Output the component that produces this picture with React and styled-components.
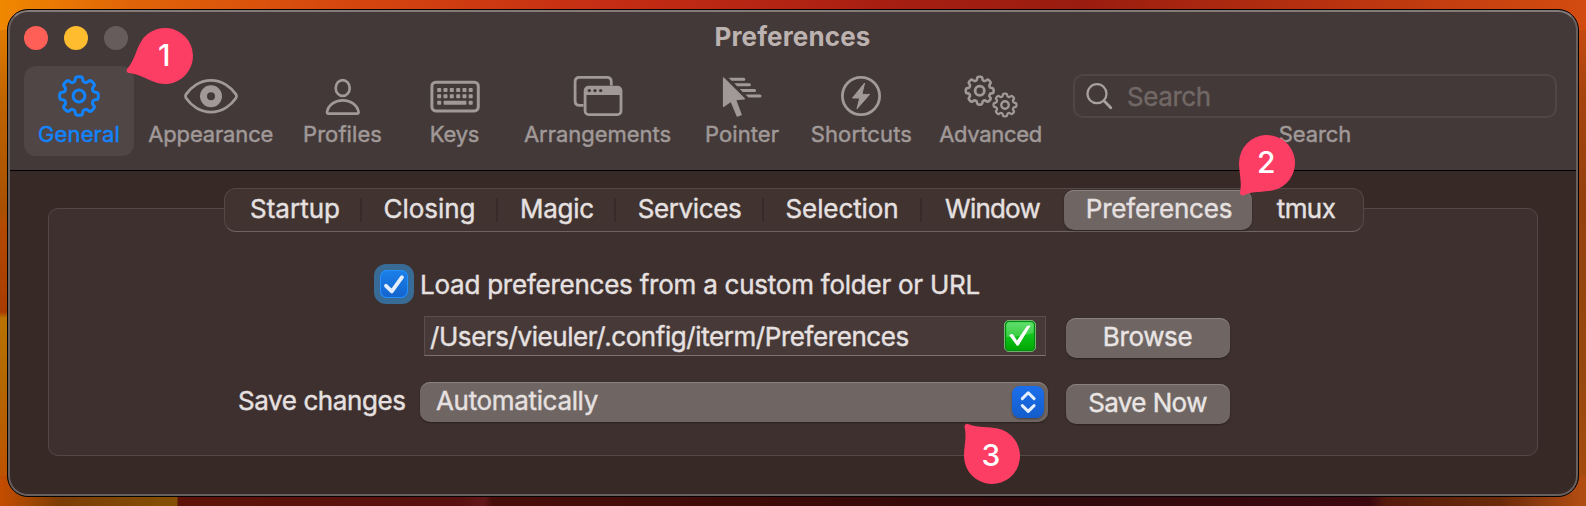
import React from "react";
import styled, { createGlobalStyle } from "styled-components";

const GlobalStyle = createGlobalStyle`
  * { box-sizing: border-box; }
  body { margin: 0; overflow: hidden; font-family: Inter, "Liberation Sans", sans-serif; }
`;

const Desktop = styled.main`
  position: relative;
  width: 1586px;
  height: 506px;
  padding: 9px 7px;
  background:
    linear-gradient(90deg, #f08800 0, #e06408 130px, #d6480e 330px, #c42c14 620px, #a61e12 900px, #9a1c10 1080px, #b83210 1330px, #d24c10 1586px) 0 0 / 100% 30px no-repeat,
    linear-gradient(90deg, #c44c00 0, #a84800 24px, #7c3c04 60px, #845004 177px, #5e1209 178px, #581110 460px, #621818 484px, #480e0a 492px, #3c0a08 790px, #300a0c 1060px, #3c0810 1370px, #561a0c 1386px, #6a2a0a 1500px, #b04c12 1580px) 0 100% / 100% 30px no-repeat,
    linear-gradient(180deg, #ee8600 0, #c06400 100px, #a85000 210px, #b44a00 226px, #a83c00 312px, #b97200 318px, #b46600 390px, #c24c00 506px) 0 0 / 30px 100% no-repeat,
    linear-gradient(180deg, #d24c10 0, #a8440e 90px, #93400e 200px, #98480e 380px, #a84c10 506px) 100% 0 / 30px 100% no-repeat;
`;

const Window = styled.section`
  display: flex;
  flex-direction: column;
  height: 488px;
  border: 1px solid #050303;
  border-radius: 21px;
  overflow: hidden;
  background: #372926;
  position: relative;

  &::after {
    content: "";
    position: absolute;
    inset: 0;
    border: 2px solid #68605e;
    border-top-color: #847b79;
    border-radius: 20px;
    pointer-events: none;
  }
`;

const Header = styled.header`
  height: 161px;
  background: #433938;
  border-bottom: 1px solid #000;
`;

const TitleBar = styled.div`
  display: grid;
  grid-template-columns: 1fr auto 1fr;
  align-items: center;
  height: 56px;
`;

const TrafficLights = styled.div`
  display: flex;
  gap: 16px;
  padding-left: 16px;
`;

const Light = styled.span`
  width: 24px;
  height: 24px;
  border-radius: 50%;
  background: ${(p) => p.$color};
`;

const Title = styled.h1`
  margin: 0;
  padding: 0 1px 2px 0;
  font-size: 26px;
  line-height: 32px;
  font-weight: 700;
  letter-spacing: 0.13px;
  color: #bcb2b0;
`;

const Toolbar = styled.nav`
  display: flex;
  padding-left: 16px;
`;

const ToolItem = styled.div`
  display: flex;
  flex-direction: column;
  align-items: center;
  flex: none;
  width: ${(p) => p.$width}px;
  height: 90px;
  padding-top: 5px;
  border-radius: 12px;
  color: ${(p) => (p.$active ? "#1284ff" : "#a09998")};
  background: ${(p) => (p.$active ? "#504645" : "transparent")};
`;

const ToolIcon = styled.svg`
  display: block;
  width: 60px;
  height: 50px;
  overflow: visible;
  fill: none;
  stroke: currentColor;
  stroke-width: 2.8;
  stroke-linecap: round;
  stroke-linejoin: round;
`;

const ToolLabel = styled.span`
  font-size: 22px;
  line-height: 26px;
  white-space: nowrap;
  letter-spacing: ${(p) => p.$track || 0}px;
  -webkit-text-stroke: 0.45px currentColor;
`;

const SearchItem = styled.div`
  display: flex;
  flex-direction: column;
  align-items: center;
  width: 484px;
  margin-left: 14px;
  padding-top: 8px;
  color: #a09998;
`;

const SearchField = styled.div`
  display: flex;
  align-items: center;
  width: 100%;
  height: 44px;
  margin-bottom: 3px;
  padding-left: 10px;
  border: 2px solid #504645;
  border-radius: 10px;
`;

const SearchGlyph = styled.svg`
  width: 28px;
  height: 28px;
  fill: none;
  stroke: #a8a1a0;
  stroke-width: 2.2;
  stroke-linecap: round;
`;

const Placeholder = styled.span`
  margin-left: 14px;
  padding-top: 2px;
  font-size: 26px;
  line-height: 32px;
  letter-spacing: -0.4px;
  color: #716866;
  -webkit-text-stroke: 0.4px currentColor;
`;

const Content = styled.div`
  display: flex;
  flex-direction: column;
  padding: 17px 40px 40px;
  color: #e6e1e0;
  font-size: 26px;
`;

const Tabs = styled.div`
  position: relative;
  z-index: 1;
  display: flex;
  align-items: center;
  align-self: flex-start;
  width: 1140px;
  height: 44px;
  margin-left: 176px;
  padding-left: 4px;
  border: 1px solid #544845;
  border-bottom-color: #6e6462;
  border-radius: 12px;
  background: #403330;
`;

const Tab = styled.div`
  flex: none;
  width: ${(p) => p.$width}px;
  height: 40px;
  padding: 0 0 1px ${(p) => p.$shift || 0}px;
  line-height: 38px;
  text-align: center;
  border-radius: 10px;
  letter-spacing: ${(p) => p.$track}px;
  -webkit-text-stroke: 0.4px currentColor;
  background: ${(p) => (p.$active ? "#6f6563" : "transparent")};
  box-shadow: ${(p) => (p.$active ? "inset 0 1px #8a807e, 0 1px 2px rgba(0,0,0,.35)" : "none")};
`;

const TabDivider = styled.i`
  width: 2px;
  height: 24px;
  margin: 0 -1px;
  background: #372b29;
`;

const Panel = styled.div`
  height: 248px;
  margin-top: -24px;
  padding-top: 55px;
  border: 1px solid #544846;
  border-radius: 10px;
  background: #3e302f;
`;

const Row = styled.div`
  display: flex;
  align-items: flex-start;
  margin-top: ${(p) => p.$top || 0}px;
  padding-left: ${(p) => p.$indent}px;
`;

const FocusRing = styled.span`
  display: grid;
  place-items: center;
  width: 40px;
  height: 40px;
  border-radius: 12px;
  background: #386b96;
`;

const Checkbox = styled.span`
  width: 28px;
  height: 28px;
  border-radius: 7px;
  background: linear-gradient(#1b80ea, #1463cc);
  box-shadow: inset 0 0 0 1px #2590fb;

  svg {
    display: block;
    fill: none;
    stroke: #e4eefc;
    stroke-width: 3.8;
    stroke-linecap: round;
    stroke-linejoin: round;
  }
`;

const Text = styled.span`
  line-height: ${(p) => p.$line || 42}px;
  height: ${(p) => p.$line || 40}px;
  width: ${(p) => (p.$width ? p.$width + "px" : "auto")};
  margin-left: ${(p) => p.$left || 0}px;
  letter-spacing: ${(p) => p.$track}px;
  white-space: nowrap;
  -webkit-text-stroke: 0.4px currentColor;
`;

const PathField = styled.div`
  display: flex;
  align-items: center;
  justify-content: space-between;
  width: 622px;
  height: 40px;
  margin-right: 20px;
  padding: 0 9px 0 5px;
  border: 1px solid #5a4d4b;
  border-bottom-color: #7c716f;
  background: #473937;
`;

const Select = styled.div`
  display: flex;
  justify-content: space-between;
  width: 628px;
  height: 40px;
  margin-right: 18px;
  padding: 4px 4px 4px 16px;
  border-radius: 10px;
  background: #6f6563;
  box-shadow: inset 0 1px #8a807e, 0 1px 2px rgba(0, 0, 0, 0.35);
`;

const Stepper = styled.svg`
  width: 32px;
  height: 32px;
  border-radius: 8px;
  background: linear-gradient(#1b6fec, #145dcb);
  box-shadow: 0 1px 2px rgba(0, 0, 0, 0.4);
  fill: none;
  stroke: #e4eefc;
  stroke-width: 3;
  stroke-linecap: round;
  stroke-linejoin: round;
`;

const Button = styled.button`
  width: 164px;
  height: 40px;
  margin: 2px 0 0;
  padding: 0 1px 3px 0;
  border: 0;
  border-radius: 10px;
  background: #6f6563;
  box-shadow: inset 0 1px #8a807e, 0 1px 2px rgba(0, 0, 0, 0.35);
  color: #e9e5e4;
  font: 400 26px/37px Inter, "Liberation Sans", sans-serif;
  letter-spacing: ${(p) => p.$track}px;
  -webkit-text-stroke: 0.4px currentColor;
`;

const Pin = styled.div`
  position: absolute;
  left: ${(p) => p.$x - 42}px;
  top: ${(p) => p.$y - 42}px;
  z-index: 3;
  display: grid;
  place-items: center;
  width: 84px;
  height: 84px;
  color: #fff;
  font-size: 30px;
  line-height: 36px;
  font-weight: 500;

  svg, span { grid-area: 1 / 1; }
  svg { transform: rotate(${(p) => p.$angle}deg); }
  span { position: relative; padding: 0 2px 2px 0; }
`;

// Closed polygon whose corners are softened by quadratic curves.
function gearPath(cx, cy, tip, root) {
  const pts = [];
  for (let i = 0; i < 8; i++) {
    const a = (i * Math.PI) / 4 - Math.PI / 2;
    [[-0.27, root], [-0.17, tip], [0.17, tip], [0.27, root]].forEach(([d, r]) =>
      pts.push([cx + r * Math.cos(a + d), cy + r * Math.sin(a + d)])
    );
  }
  const at = (p, q, t) => `${(p[0] + (q[0] - p[0]) * t).toFixed(2)} ${(p[1] + (q[1] - p[1]) * t).toFixed(2)}`;
  const n = pts.length;
  return (
    pts
      .map((p, i) => {
        const prev = pts[(i + n - 1) % n];
        const next = pts[(i + 1) % n];
        return `${i ? "L" : "M"}${at(p, prev, 0.35)}Q${p[0].toFixed(2)} ${p[1].toFixed(2)} ${at(p, next, 0.35)}`;
      })
      .join("") + "Z"
  );
}

const icons = {
  gear: (
    <>
      <path d={gearPath(30, 25, 19.6, 15)} strokeWidth="3" />
      <circle cx="30" cy="25" r="5.9" strokeWidth="3" />
    </>
  ),
  eye: (
    <>
      <path d="M5 23.4C10 16 19 9.3 30 9.3S50 16 55 23.4Q56.2 25.2 55 27C50 34.4 41 41.1 30 41.1S10 34.4 5 27Q3.8 25.2 5 23.4Z" />
      <circle cx="30" cy="25.2" r="7.5" strokeWidth="7" />
    </>
  ),
  person: (
    <>
      <ellipse cx="29.7" cy="17" rx="7" ry="7.9" strokeWidth="2.7" />
      <path d="M15.5 42.7C14.4 42.7 13.9 41.9 14.1 40.8C15.2 34.3 21.7 29.3 29.8 29.3S44.4 34.3 45.5 40.8C45.7 41.9 45.2 42.7 44.1 42.7Z" strokeWidth="2.7" />
    </>
  ),
  keyboard: (
    <>
      <rect x="6.9" y="11.3" width="46.4" height="28.6" rx="3.8" strokeWidth="3" />
      <g fill="currentColor" stroke="none">
        {[19, 25.3].map((y) => [14.2, 20.5, 26.8, 33.2, 39.5, 45.7].map((x) => <rect key={x + y} x={x - 2} y={y - 2} width="4" height="4" rx=".8" />))}
        <rect x="12.2" y="29.7" width="4" height="4" rx=".8" />
        <rect x="18.6" y="29.7" width="22.8" height="4" rx=".8" />
        <rect x="43.7" y="29.7" width="4" height="4" rx=".8" />
      </g>
    </>
  ),
  windows: (
    <>
      <path d="M15.5 34.3H11.5Q7.1 34.3 7.1 29.9V10.8Q7.1 6.4 11.5 6.4H38.9Q43.3 6.4 43.3 10.8V14.5" strokeWidth="2.8" strokeLinecap="butt" />
      <rect x="17.1" y="16.1" width="35.9" height="27.5" rx="3.6" strokeWidth="2.8" />
      <path d="M17 24V19.5Q17 16 20.5 16H49.5Q53 16 53 19.5V24Z" fill="currentColor" stroke="none" />
      <g fill="#433938" stroke="none">
        <circle cx="21.3" cy="19.6" r="1.7" />
        <circle cx="27" cy="19.6" r="1.7" />
        <circle cx="32.7" cy="19.6" r="1.7" />
      </g>
    </>
  ),
  pointer: (
    <>
      <path d="M11.5 7L32.4 27.8L23.6 28.6L29.2 43.6L25.2 45.1L19 30.2L11.5 35.4Z" fill="currentColor" strokeWidth="1.2" />
      <path d="M31.8 6.7A1.5 1.5 0 0 1 31.8 9.7H19.6L16.6 6.7ZM37.4 12.3A1.5 1.5 0 0 1 37.4 15.3H25.2L22.2 12.3ZM42.6 17.9A1.5 1.5 0 0 1 42.6 20.9H30.8L27.8 17.9ZM48 23.6A1.5 1.5 0 0 1 48 26.6H36.5L33.5 23.6Z" fill="currentColor" stroke="none" />
    </>
  ),
  bolt: (
    <>
      <circle cx="30" cy="25" r="18.6" />
      <path d="M33.4 12.3L21.5 27H28.7L26 37.8L38.6 23.4H31.2Z" fill="currentColor" strokeWidth="1" />
    </>
  ),
  gears: (
    <>
      <path d={gearPath(18.7, 19.7, 14.1, 10.8)} strokeWidth="2.6" />
      <circle cx="18.7" cy="19.7" r="4.6" strokeWidth="2.8" />
      <path d={gearPath(44, 34, 11.6, 8.9)} strokeWidth="2.3" />
      <circle cx="44" cy="34" r="3.7" strokeWidth="2.4" />
    </>
  ),
};

const tools = [
  { name: "General", icon: "gear", width: 110, track: 0.13, active: true },
  { name: "Appearance", icon: "eye", width: 153.5, track: -0.16 },
  { name: "Profiles", icon: "person", width: 110, track: 0.07 },
  { name: "Keys", icon: "keyboard", width: 114, track: -0.22 },
  { name: "Arrangements", icon: "windows", width: 172, track: -0.02 },
  { name: "Pointer", icon: "pointer", width: 117, track: 0.07 },
  { name: "Shortcuts", icon: "bolt", width: 121.8, track: 0.15 },
  { name: "Advanced", icon: "gears", width: 136.6, track: -0.31 },
];

const tabs = [
  { name: "Startup", width: 132, track: 0, divider: true },
  { name: "Closing", width: 136, track: -0.04, shift: 1, divider: true },
  { name: "Magic", width: 118, track: -0.26, shift: 2, divider: true },
  { name: "Services", width: 148, track: -0.38, shift: 1, divider: true },
  { name: "Selection", width: 158, track: -0.11, divider: true },
  { name: "Window", width: 143, track: -0.8 },
  { name: "Preferences", width: 188, track: -0.22, shift: 2, active: true },
  { name: "tmux", width: 107, track: -0.55, shift: 1 },
];

function Callout({ x, y, angle, children }) {
  return (
    <Pin $x={x} $y={y} $angle={angle}>
      <svg width="84" height="84" viewBox="-42 -42 84 84">
        <path fill="#fc3d64" d="M17.2-22.1C24.5-16.5 30-7.5 39.2-2.6A2.7 2.7 0 0 1 39.2 2.6C30 7.5 24.5 16.5 17.2 22.1A28 28 0 1 1 17.2-22.1Z" />
      </svg>
      <span>{children}</span>
    </Pin>
  );
}

function CheckEmoji() {
  return (
    <svg width="32" height="32" viewBox="0 0 32 32">
      <defs>
        <linearGradient id="green" x1="0" y1="0" x2="0" y2="1">
          <stop offset="0" stopColor="#3fd84f" />
          <stop offset=".45" stopColor="#10c51c" />
          <stop offset="1" stopColor="#00a400" />
        </linearGradient>
      </defs>
      <rect x=".5" y=".5" width="31" height="31" rx="4.5" fill="url(#green)" stroke="#a9cfa4" strokeWidth=".8" />
      <rect x="1.4" y="1.4" width="29.2" height="29.2" rx="3.8" fill="none" stroke="#078c12" strokeWidth="1.2" />
      <path d="M2.5 5Q2.5 2.5 5 2.5H27Q29.5 2.5 29.5 5V13Q16 17 2.5 17Z" fill="#fff" opacity=".2" />
      <path d="M5.2 15.2Q8 12.8 9.6 15.2L13 20.6L22.6 6.6Q24 5 26.6 5.6L15.2 24.6Q13.6 27.2 12 24.6Z" fill="#fff" />
    </svg>
  );
}

export default function App() {
  return (
    <Desktop>
      <GlobalStyle />
      <Window>
        <Header>
          <TitleBar>
            <TrafficLights>
              <Light $color="#ff5f57" />
              <Light $color="#febc2e" />
              <Light $color="#665c5b" />
            </TrafficLights>
            <Title>Preferences</Title>
          </TitleBar>
          <Toolbar>
            {tools.map((t) => (
              <ToolItem key={t.name} $width={t.width} $active={t.active}>
                <ToolIcon viewBox="0 0 60 50">{icons[t.icon]}</ToolIcon>
                <ToolLabel $track={t.track}>{t.name}</ToolLabel>
              </ToolItem>
            ))}
            <SearchItem>
              <SearchField>
                <SearchGlyph viewBox="0 0 28 28">
                  <circle cx="12" cy="11.7" r="9.5" />
                  <path d="M18.9 18.7L25.8 25.7" strokeWidth="2.8" />
                </SearchGlyph>
                <Placeholder>Search</Placeholder>
              </SearchField>
              <ToolLabel $track={-0.12}>Search</ToolLabel>
            </SearchItem>
          </Toolbar>
        </Header>
        <Content>
          <Tabs>
            {tabs.map((t) => (
              <React.Fragment key={t.name}>
                <Tab $width={t.width} $track={t.track} $shift={t.shift} $active={t.active}>{t.name}</Tab>
                {t.divider && <TabDivider />}
              </React.Fragment>
            ))}
          </Tabs>
          <Panel>
            <Row $indent={325}>
              <FocusRing>
                <Checkbox>
                  <svg width="28" height="28" viewBox="0 0 28 28">
                    <path d="M6 15.8L11.8 21.4L22 7.2" />
                  </svg>
                </Checkbox>
              </FocusRing>
              <Text $left={6} $track={-0.24}>Load preferences from a custom folder or URL</Text>
            </Row>
            <Row $indent={375} $top={12}>
              <PathField>
                <Text $track={-0.43}>/Users/vieuler/.config/iterm/Preferences</Text>
                <CheckEmoji />
              </PathField>
              <Button $track={-0.38}>Browse</Button>
            </Row>
            <Row $indent={189} $top={24}>
              <Text $width={182} $track={-0.41} $line={38}>Save changes</Text>
              <Select>
                <Text $track={-0.34} $line={30}>Automatically</Text>
                <Stepper viewBox="0 0 32 32">
                  <path d="M10.3 12.6L16.2 6.8L22.1 12.6M10.3 19.6L16.2 25.4L22.1 19.6" />
                </Stepper>
              </Select>
              <Button $track={-0.6}>Save Now</Button>
            </Row>
          </Panel>
        </Content>
      </Window>
      <Callout x={165.3} y={56} angle={158}>1</Callout>
      <Callout x={1267.3} y={163} angle={129.4}>2</Callout>
      <Callout x={992} y={455.6} angle={229.9}>3</Callout>
    </Desktop>
  );
}
